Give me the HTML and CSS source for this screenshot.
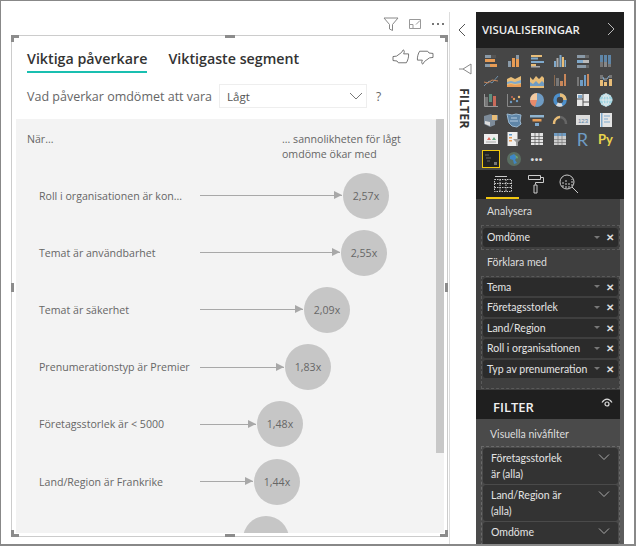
FILE: index.html
```html
<!DOCTYPE html>
<html lang="sv">
  <head>
    <meta charset="UTF-8" />
    <title>Viktiga påverkare</title>
    <link rel="stylesheet" href="styles.css">
  </head>
  <body>
    <div class="window">
      <!-- report canvas -->
      <div class="report">
        <div class="visual-tools">
          <svg width="16" height="16" viewBox="0 0 16 16"><path d="M1 2h14L9.500 8.500v6L6.500 13V8.500z" fill="none" stroke="#888"/></svg>
          <svg width="14" height="14" viewBox="0 0 14 14"><path d="M1.500 2.500h11v9h-11zM8 7.500l4-4M5 11.500V7.500h-3.500" fill="none" stroke="#999"/></svg>
          <svg width="14" height="4" viewBox="0 0 14 4"><path d="M1 1h2v2H1zM6 1h2v2H6zM11 1h2v2h-2z" fill="#777"/></svg>
        </div>
        <div class="visual">
          <i class="handle corner tl"></i><i class="handle corner tr"></i>
          <i class="handle corner bl"></i><i class="handle corner br"></i>
          <i class="handle mid-top"></i><i class="handle mid-bottom"></i>
          <i class="handle mid-left"></i><i class="handle mid-right"></i>

          <div class="tabs">
            <span class="tab active">Viktiga påverkare</span>
            <span class="tab">Viktigaste segment</span>
            <div class="thumbs">
              <svg width="18" height="16" viewBox="0 0 20 18"><path d="M1 8.500l4-.5L10.500 4l2-3c1.500.5 1.500 2 .5 4.500h5.500c.5 3-1 8-2.500 10H7L5.500 13.500 1 13z" fill="none" stroke="#666"/></svg>
              <svg width="18" height="16" viewBox="0 0 20 18"><path d="M19 9.500l-4 .5-5.500 4-2 3c-1.500-.5-1.500-2-.5-4.500H1.500c-.5-3 1-8 2.500-10h9l1.500 2 4.500.5z" fill="none" stroke="#666"/></svg>
            </div>
          </div>

          <div class="question">
            <span>Vad påverkar omdömet att vara</span>
            <div class="select">
              <span>Lågt</span>
              <svg width="14" height="8" viewBox="0 0 14 8"><path d="M1 1l6 6 6-6" fill="none" stroke="#777"/></svg>
            </div>
            <span class="help">?</span>
          </div>

          <div class="chart">
            <div class="scrollbar"></div>
            <div class="chart-head">
              <span>När...</span>
              <span class="chart-head-right">... sannolikheten för lågt<br>omdöme ökar med</span>
            </div>
            <div class="row">
              <span class="row-label">Roll i organisationen är kon...</span>
              <span class="arrow" style="width:142px"></span>
              <span class="bubble">2,57x</span>
            </div>
            <div class="row">
              <span class="row-label">Temat är användbarhet</span>
              <span class="arrow" style="width:140px"></span>
              <span class="bubble">2,55x</span>
            </div>
            <div class="row">
              <span class="row-label">Temat är säkerhet</span>
              <span class="arrow" style="width:103px"></span>
              <span class="bubble">2,09x</span>
            </div>
            <div class="row">
              <span class="row-label">Prenumerationstyp är Premier</span>
              <span class="arrow" style="width:84px"></span>
              <span class="bubble">1,83x</span>
            </div>
            <div class="row">
              <span class="row-label">Företagsstorlek är &lt; 5000</span>
              <span class="arrow" style="width:56px"></span>
              <span class="bubble">1,48x</span>
            </div>
            <div class="row">
              <span class="row-label">Land/Region är Frankrike</span>
              <span class="arrow" style="width:53px"></span>
              <span class="bubble">1,44x</span>
            </div>
            <div class="row">
              <span class="row-label"></span>
              <span class="arrow" style="width:42px"></span>
              <span class="bubble"></span>
            </div>
          </div>
        </div>
      </div>

      <!-- collapsed filter rail -->
      <div class="rail">
        <svg class="rail-back" width="10" height="14" viewBox="0 0 10 14"><path d="M8 1L2 7l6 6" fill="none" stroke="#555"/></svg>
        <svg class="rail-pin" width="14" height="12" viewBox="0 0 14 12"><path d="M5 6l8-5v10zM1 6h4" fill="none" stroke="#888"/></svg>
        <span class="rail-title">FILTER</span>
      </div>

      <!-- visualizations pane -->
      <div class="pane">
        <div class="pane-scroll"></div>
        <div class="pane-head">
          <span>VISUALISERINGAR</span>
          <svg width="8" height="14" viewBox="0 0 8 14"><path d="M1 1l6 6-6 6" fill="none" stroke="#bbb"/></svg>
        </div>

        <div class="palette">
          <svg viewBox="0 0 16 16"><rect x="2" y="2" width="6" height="3" fill="#8a9aa8"/><rect x="8" y="2" width="5" height="3" fill="#555"/><rect x="2" y="6" width="10" height="3" fill="#e89c55"/><rect x="2" y="11" width="5" height="3" fill="#8a9aa8"/><rect x="7" y="11" width="7" height="3" fill="#e89c55"/></svg>
          <svg viewBox="0 0 16 16"><rect x="2" y="8" width="3" height="6" fill="#8a9aa8"/><rect x="6" y="5" width="3" height="9" fill="#e89c55"/><rect x="10" y="2" width="3" height="12" fill="#e89c55"/><rect x="10" y="2" width="3" height="4" fill="#8a9aa8"/></svg>
          <svg viewBox="0 0 16 16"><rect x="2" y="2" width="11" height="2" fill="#e8bd78"/><rect x="2" y="4.500" width="7" height="2" fill="#7fa9cc"/><rect x="2" y="8" width="13" height="2" fill="#7fa9cc"/><rect x="2" y="11" width="5" height="2" fill="#e8bd78"/><rect x="2" y="13" width="9" height="1.500" fill="#aaa"/></svg>
          <svg viewBox="0 0 16 16"><rect x="2" y="8" width="2" height="6" fill="#7fa9cc"/><rect x="4.500" y="5" width="2" height="9" fill="#aaa"/><rect x="7.500" y="2" width="2" height="12" fill="#7fa9cc"/><rect x="10" y="4" width="2" height="10" fill="#e8bd78"/><rect x="12.500" y="7" width="1.500" height="7" fill="#7fa9cc"/></svg>
          <svg viewBox="0 0 16 16"><rect x="2" y="2" width="8" height="3" fill="#8a9aa8"/><rect x="10" y="2" width="4" height="3" fill="#666"/><rect x="2" y="7" width="6" height="3" fill="#7fa9cc"/><rect x="8" y="7" width="6" height="3" fill="#bbb"/><rect x="2" y="12" width="9" height="3" fill="#8a9aa8"/><rect x="11" y="12" width="3" height="3" fill="#666"/></svg>
          <svg viewBox="0 0 16 16"><rect x="2" y="2" width="3" height="12" fill="#777"/><rect x="2" y="2" width="3" height="7" fill="#5f86a8"/><rect x="6" y="2" width="3" height="12" fill="#5f86a8"/><rect x="6" y="9" width="3" height="5" fill="#888"/><rect x="10" y="2" width="3" height="12" fill="#777"/><rect x="10" y="2" width="3" height="9" fill="#5f86a8"/></svg>

          <svg viewBox="0 0 16 16"><path d="M1 14l5-5 3 2 6-7" fill="none" stroke="#6f8fa8"/><path d="M1 10l4 1 4-3 6 1" fill="none" stroke="#c9875a"/></svg>
          <svg viewBox="0 0 16 16"><path d="M1 7l4-2 4 2 6-3v11H1z" fill="#e8bd78"/><path d="M1 10l4-1 4 1 6-2v3l-6 1-4-1-4 1z" fill="#7fa9cc"/><path d="M1 13l4-1 4 1 6-1v3H1z" fill="#e89c55"/></svg>
          <svg viewBox="0 0 16 16"><path d="M1 5l3 3 3-4 3 3 3-3 2 2v10H1z" fill="#e8bd78"/><path d="M1 10l3 2 3-3 3 3 3-3 2 2v3l-14 0z" fill="#6f9cc4"/></svg>
          <svg viewBox="0 0 16 16"><rect x="2" y="3" width="1" height="11" fill="#8a6a50"/><rect x="4" y="6" width="3" height="8" fill="#777"/><rect x="8" y="9" width="3" height="5" fill="#c9875a"/><rect x="12" y="2" width="2" height="12" fill="#c9875a"/></svg>
          <svg viewBox="0 0 16 16"><rect x="2" y="5" width="2" height="9" fill="#777"/><rect x="5" y="8" width="3" height="6" fill="#6f9cc4"/><rect x="9" y="3" width="2" height="11" fill="#6f9cc4"/><rect x="12" y="2" width="2" height="12" fill="#c9875a"/></svg>
          <svg viewBox="0 0 16 16"><path d="M2 3h3v4H2zM6 6h3v3H6zM11 3h3v3h-3z" fill="#777"/><path d="M2 8h3v6H2zM6 10h3v4H6zM11 7h3v7h-3z" fill="#e8bd78"/><path d="M5 5l1 3M9 7l2-3" stroke="#7fa9cc"/></svg>

          <svg viewBox="0 0 16 16"><rect x="2" y="5" width="3" height="9" fill="#777"/><rect x="6" y="2" width="3" height="8" fill="#5f8f7f"/><rect x="10" y="4" width="3" height="10" fill="#c96a5a"/><path d="M1.500 2v12.500H15" fill="none" stroke="#999"/></svg>
          <svg viewBox="0 0 16 16"><path d="M1.500 2v12.500H15" fill="none" stroke="#888"/><circle cx="5" cy="10" r="1.200" fill="#6f9cc4"/><circle cx="8" cy="7" r="1.200" fill="#e89c55"/><circle cx="11" cy="9" r="1.200" fill="#6f9cc4"/><circle cx="13" cy="5" r="1.200" fill="#e8bd78"/><circle cx="6" cy="5" r="1" fill="#c96a5a"/></svg>
          <svg viewBox="0 0 16 16"><circle cx="8" cy="8" r="7" fill="#6f9cc4"/><path d="M8 8V1a7 7 0 0 0-7 7z" fill="#f2c9a0"/><path d="M8 8H1a7 7 0 0 0 5 6.700z" fill="#e88a6a"/></svg>
          <svg viewBox="0 0 16 16"><circle cx="8" cy="8" r="5" fill="none" stroke="#4d90cc" stroke-width="3.500"/><path d="M8 3a5 5 0 0 1 5 5" fill="none" stroke="#e8bd78" stroke-width="3.500"/><path d="M10 12.500a5 5 0 0 1-5-.5" fill="none" stroke="#ddd" stroke-width="3.500"/></svg>
          <svg viewBox="0 0 16 16"><rect x="2" y="2" width="12" height="12" fill="#e8e8e8"/><path d="M8 2v12M2 7h6M8 10h6" stroke="#555"/><rect x="3" y="3" width="4" height="3" fill="#7fa9cc"/></svg>
          <svg viewBox="0 0 16 16"><circle cx="8" cy="8" r="6.500" fill="#9fd3e0"/><path d="M1.500 8h13M8 1.500v13M3 4h10M3 12h10M8 1.500c-4 4-4 9 0 13M8 1.500c4 4 4 9 0 13" fill="none" stroke="#eee" stroke-width=".8"/></svg>

          <svg viewBox="0 0 16 16"><path d="M1 4l7-2 2 2 5-1v5l-3 1v4l-5 2-6-3z" fill="#7d8b99"/><path d="M9 3h5v5H9z" fill="#e8bd78"/><path d="M2 9l5 1v4l-5-2z" fill="#ddd"/></svg>
          <svg viewBox="0 0 16 16"><path d="M1 2l5 1 4-1 5 1-1 6 1 3-4 3-5-1-3-3-1-4z" fill="#5f86a8" stroke="#9ab8d0"/><path d="M5 6h6M4 9h8" stroke="#cde" stroke-width=".8"/></svg>
          <svg viewBox="0 0 16 16"><rect x="1" y="3" width="14" height="2.500" fill="#8fb4d0"/><rect x="3.500" y="7" width="9" height="2.500" fill="#e89c55"/><rect x="6" y="11" width="4" height="3" fill="#7fa9cc"/></svg>
          <svg viewBox="0 0 16 16"><path d="M2 12a6.500 6.500 0 0 1 6-7" fill="none" stroke="#e8bd78" stroke-width="2.500"/><path d="M8 5a6.500 6.500 0 0 1 6 7" fill="none" stroke="#666" stroke-width="2.500"/></svg>
          <svg viewBox="0 0 16 16"><rect x="1" y="3" width="14" height="10" fill="#ddd"/><text x="8" y="10.500" font-size="6" text-anchor="middle" fill="#5f86a8" font-family="Liberation Sans">123</text></svg>
          <svg viewBox="0 0 16 16"><rect x="2" y="1" width="12" height="14" fill="#e4e4e4"/><rect x="3" y="1" width="1.500" height="14" fill="#7fa9cc"/><path d="M6 4h6M6 7h4M6 10h6" stroke="#7fa9cc"/></svg>

          <svg viewBox="0 0 16 16"><rect x="1" y="3" width="14" height="10" fill="#eee"/><path d="M4 9l2-3 2 3z" fill="#e06a5a"/><path d="M9 9l2-3 2 3z" fill="#5fa87f"/><path d="M3 11h10" stroke="#aaa"/></svg>
          <svg viewBox="0 0 16 16"><rect x="1.500" y="1" width="10" height="14" fill="#eee"/><rect x="3" y="3" width="3" height="1.500" fill="#5f9cd0"/><rect x="3" y="6" width="3" height="1.500" fill="#e89c55"/><rect x="3" y="9" width="3" height="1.500" fill="#e89c55"/><path d="M7 8h8l-3 3v3l-2 1v-4z" fill="#999"/></svg>
          <svg viewBox="0 0 16 16"><rect x="2" y="2" width="12" height="12" fill="#e4e4e4"/><path d="M2 5.500h12M2 8.500h12M2 11.500h12M6 2v12M10 2v12" stroke="#555" stroke-width=".7"/></svg>
          <svg viewBox="0 0 16 16"><rect x="2" y="2" width="12" height="12" fill="#ccc"/><rect x="2" y="2" width="12" height="3" fill="#6f9cc4"/><path d="M2 8.500h12M2 11.500h12M6 2v12M10 2v12" stroke="#777" stroke-width=".7"/></svg>
          <span class="palette-r">R</span>
          <span class="palette-py">Py</span>

          <span class="palette-selected">
            <svg viewBox="0 0 16 16"><path d="M2 4h4M3 7h5M4 10h3" stroke="#666"/><rect x="11" y="11" width="3" height="3" fill="#777"/></svg>
          </span>
          <svg viewBox="0 0 16 16"><circle cx="8" cy="8" r="7" fill="#5a6e62"/><path d="M4 5l4-2 3 3-2 3 2 3-3 1-1-4-3-1z" fill="#3f86c4"/><path d="M9 4l3 2-1 2z" fill="#6fae6f"/></svg>
          <span class="palette-more">···</span>
        </div>

        <div class="pane-tabs">
          <span class="pane-tab selected">
            <svg width="20" height="18" viewBox="0 0 20 18"><path d="M2 1.500h12" stroke="#ccc"/><path d="M1.500 4.500h17v12h-17zM1.500 8.500h17M1.500 12.500h17M7 4.500v12M13 4.500v12" fill="none" stroke="#ccc" stroke-dasharray="1.500 1"/></svg>
          </span>
          <span class="pane-tab">
            <svg width="18" height="20" viewBox="0 0 18 20"><path d="M1.500 1.500h12v4h-12zM13.500 3.500h3v5H8.500v2M7 11h3v8H7z" fill="none" stroke="#ccc"/></svg>
          </span>
          <span class="pane-tab">
            <svg width="20" height="20" viewBox="0 0 20 20"><circle cx="8" cy="8" r="7" fill="none" stroke="#ccc"/><path d="M13 13l6 6" stroke="#ccc"/><path d="M4 13V8M7 14V6M10 14V9M13 12V5" stroke="#ccc" stroke-dasharray="2 1"/></svg>
          </span>
        </div>

        <div class="fields">
          <div class="field-title">Analysera</div>
          <div class="well">
            <div class="field"><span>Omdöme</span><i class="caret"></i><b>✕</b></div>
          </div>
          <div class="field-title">Förklara med</div>
          <div class="well well-tall">
            <div class="field"><span>Tema</span><i class="caret"></i><b>✕</b></div>
            <div class="field"><span>Företagsstorlek</span><i class="caret"></i><b>✕</b></div>
            <div class="field"><span>Land/Region</span><i class="caret"></i><b>✕</b></div>
            <div class="field"><span>Roll i organisationen</span><i class="caret"></i><b>✕</b></div>
            <div class="field"><span>Typ av prenumeration</span><i class="caret"></i><b>✕</b></div>
          </div>
        </div>

        <div class="filter-head">
          <span>FILTER</span>
          <svg width="12" height="9" viewBox="0 0 12 9"><path d="M1 4.500c3-4.500 7-4.500 10 0" fill="none" stroke="#ddd" stroke-width="1.200"/><circle cx="6" cy="6" r="2" fill="none" stroke="#ddd" stroke-width="1.200"/></svg>
        </div>

        <div class="filters">
          <div class="filter-title">Visuella nivåfilter</div>
          <div class="filter-well">
            <div class="filter-card">
              <span>Företagsstorlek<br>är (alla)</span>
              <svg width="12" height="6" viewBox="0 0 12 6"><path d="M1 .5l5 5 5-5" fill="none" stroke="#aaa"/></svg>
            </div>
            <div class="filter-card">
              <span>Land/Region är<br>(alla)</span>
              <svg width="12" height="6" viewBox="0 0 12 6"><path d="M1 .5l5 5 5-5" fill="none" stroke="#aaa"/></svg>
            </div>
            <div class="filter-card">
              <span>Omdöme</span>
              <svg width="12" height="6" viewBox="0 0 12 6"><path d="M1 .5l5 5 5-5" fill="none" stroke="#aaa"/></svg>
            </div>
          </div>
        </div>
      </div>
    </div>
  </body>
</html>
```

FILE: styles.css
```css
html,
body {
  margin: 0;
  background: #fff;
}
body {
  font-family: "Open Sans", "Noto Sans", sans-serif;
  overflow: hidden;
}
.window {
  display: flex;
  box-sizing: border-box;
  width: 636px;
  height: 546px;
  padding: 11px 10px 0 0;
  border: 1px solid #888;
  border-right-width: 2px;
  border-bottom-width: 2px;
  background: #fff;
  overflow: hidden;
}

/* report side */
.report {
  width: 449px;
  flex: none;
  padding: 0 1px 0 10px;
  box-sizing: border-box;
  border-right: 1px solid #ddd;
}
.visual-tools {
  display: flex;
  justify-content: flex-end;
  align-items: center;
  gap: 9px;
  height: 23px;
  padding-right: 3px;
}
.visual {
  position: relative;
  box-sizing: border-box;
  height: 502px;
  border: 1px solid #ccc;
  padding: 0 3px 3px 4px;
  display: flex;
  flex-direction: column;
}
.handle {
  position: absolute;
  background: #8c8c8c;
}
.corner {
  width: 8px;
  height: 7px;
  background: linear-gradient(#8c8c8c, #8c8c8c) 0 0 / 100% 3px no-repeat, linear-gradient(#8c8c8c, #8c8c8c) 0 0 / 3px 100% no-repeat;
}
.tl { top: -1px; left: -1px; }
.tr { top: -1px; right: -1px; transform: scaleX(-1); }
.bl { bottom: -1px; left: -1px; transform: scaleY(-1); }
.br { bottom: -1px; right: -1px; transform: scale(-1); }
.mid-top { top: -1px; left: 213px; width: 10px; height: 3px; }
.mid-bottom { bottom: -1px; left: 213px; width: 10px; height: 3px; }
.mid-left { left: -1px; top: 247px; width: 3px; height: 9px; }
.mid-right { right: -1px; top: 247px; width: 3px; height: 9px; }

.tabs {
  display: flex;
  align-items: flex-start;
  gap: 21px;
  padding: 12px 0 0 11px;
  height: 36px;
  box-sizing: border-box;
  font-size: 14.250px;
  font-weight: 600;
  color: #333;
}
.tab {
  line-height: 22px;
  padding-bottom: 1px;
  border-bottom: 2px solid transparent;
}
.tab.active {
  border-bottom-color: #19bfb0;
}
.thumbs {
  display: flex;
  gap: 6px;
  margin: 1px 0 0 auto;
  padding-right: 10px;
}
.question {
  display: flex;
  align-items: center;
  gap: 7px;
  height: 24px;
  margin-top: 12px;
  padding-left: 11px;
  font-size: 12.500px;
  color: #666;
}
.select {
  display: flex;
  align-items: center;
  justify-content: space-between;
  box-sizing: border-box;
  width: 148px;
  height: 24px;
  padding: 0 3px 0 7px;
  border: 1px solid #eee;
  font-size: 11.500px;
  color: #555;
}
.help {
  margin-left: 2px;
  font-size: 12px;
}
.chart {
  position: relative;
  flex: 1;
  margin-top: 11px;
  background: #f3f3f3;
  overflow: hidden;
  font-size: 10.600px;
  color: #666;
}
.scrollbar {
  position: absolute;
  top: 0;
  right: 0;
  width: 8px;
  height: 334px;
  background: #c8c8c8;
}
.chart-head {
  display: flex;
  justify-content: space-between;
  height: 48px;
  padding: 13px 0 0 11px;
  box-sizing: border-box;
  line-height: 15px;
}
.chart-head-right {
  width: 162px;
}
.row {
  display: flex;
  align-items: center;
  height: 57.200px;
}
.row-label {
  width: 184px;
  flex: none;
  padding-left: 23px;
  box-sizing: border-box;
  white-space: nowrap;
}
.arrow {
  position: relative;
  height: 1px;
  background: #a8a8a8;
  margin-right: 1px;
}
.arrow::after {
  content: "";
  position: absolute;
  right: 0;
  top: -4px;
  border-left: 8px solid #a8a8a8;
  border-top: 4.500px solid transparent;
  border-bottom: 4.500px solid transparent;
}
.bubble {
  display: flex;
  align-items: center;
  justify-content: center;
  flex: none;
  width: 46px;
  height: 46px;
  border-radius: 50%;
  background: #c6c6c6;
}

/* collapsed filter rail */
.rail {
  width: 26px;
  flex: none;
  display: flex;
  flex-direction: column;
  align-items: center;
}
.rail-back {
  margin: 11px 3px 0 0;
}
.rail-pin {
  margin: 26px 0 0 3px;
}
.rail-title {
  margin: 13px 0 0 2px;
  writing-mode: vertical-rl;
  font-size: 12.500px;
  font-weight: 700;
  color: #333;
}

/* dark pane */
.pane {
  position: relative;
  width: 148px;
  flex: none;
  background: #3f3f3f;
  color: #ddd;
  font-family: Lato, "Open Sans", sans-serif;
  font-size: 10.500px;
  display: flex;
  flex-direction: column;
}
.pane-scroll {
  position: absolute;
  top: 187px;
  right: 0;
  bottom: 0;
  width: 4px;
  background: #5c5c5c;
}
.pane-head {
  display: flex;
  align-items: center;
  justify-content: space-between;
  height: 36px;
  padding: 0 9px 2px 6px;
  box-sizing: border-box;
  background: #1f1f1f;
  font-family: "Open Sans", sans-serif;
  font-size: 11.400px;
  font-weight: 600;
  color: #eee;
}
.palette {
  display: grid;
  grid-template-columns: repeat(6, 23px);
  grid-auto-rows: 19.600px;
  justify-items: center;
  align-items: center;
  height: 122px;
  box-sizing: border-box;
  padding: 3px 0 0 3px;
  background: #464646;
}
.palette svg {
  width: 16px;
  height: 16px;
}
.palette-r {
  font-size: 18px;
  line-height: 18px;
  color: #6f9cc4;
}
.palette-py {
  font-size: 13px;
  line-height: 16px;
  font-weight: 700;
  color: #e8d44d;
}
.palette-selected {
  display: flex;
  align-items: center;
  justify-content: center;
  box-sizing: border-box;
  width: 18px;
  height: 18px;
  border: 1px solid #f2c811;
  background: #222;
}
.palette-more {
  font-size: 15px;
  line-height: 15px;
  font-weight: 700;
  color: #ddd;
}
.pane-tabs {
  display: flex;
  align-items: center;
  height: 29px;
  padding-left: 10px;
  background: #1f1f1f;
  box-sizing: border-box;
}
.pane-tab {
  display: flex;
  justify-content: center;
  align-items: center;
  width: 33px;
  height: 29px;
  box-sizing: border-box;
  border-bottom: 2px solid transparent;
}
.pane-tab.selected {
  border-bottom-color: #f2c811;
}
.fields {
  height: 191px;
  padding: 4px 0 0 5px;
  box-sizing: border-box;
  flex: none;
}
.field-title {
  height: 22px;
  line-height: 16px;
  padding-left: 6px;
}
.well {
  width: 139px;
  box-sizing: border-box;
  border: 1px dashed #5a5a5a;
  padding: 2px 1px;
  display: flex;
  flex-direction: column;
  gap: 2px;
  margin-bottom: 4px;
}
.well-tall {
  height: 113px;
  margin-bottom: 0;
  padding-top: 1px;
}
.field {
  display: flex;
  align-items: center;
  height: 18.500px;
  padding: 0 4px;
  background: #2b2b2b;
  border-radius: 3px;
  color: #e4e4e4;
}
.field span {
  flex: 1;
  white-space: nowrap;
}
.caret {
  width: 0;
  height: 0;
  margin-right: 6px;
  border-top: 3px solid #777;
  border-left: 3px solid transparent;
  border-right: 3px solid transparent;
}
.field b {
  font-size: 10px;
  line-height: 10px;
  color: #ddd;
}
.filter-head {
  display: flex;
  justify-content: space-between;
  flex: none;
  height: 29px;
  padding: 8px 11px 0 17px;
  box-sizing: border-box;
  background: #1f1f1f;
  font-family: "Open Sans", sans-serif;
  font-size: 13px;
  line-height: 18px;
  font-weight: 600;
  color: #f0f0f0;
}
.filters {
  flex: 1;
  background: #4a4a4a;
  padding: 7px 0 0 5px;
  overflow: hidden;
}
.filter-title {
  height: 20px;
  line-height: 16px;
  padding-left: 9px;
}
.filter-well {
  width: 139px;
  box-sizing: border-box;
  border: 1px dashed #6a6a6a;
  border-bottom: 0;
  padding: 1px 1px 0;
  display: flex;
  flex-direction: column;
  gap: 1px;
}
.filter-card {
  display: flex;
  justify-content: space-between;
  box-sizing: border-box;
  min-height: 34px;
  padding: 2px 8px;
  background: #333;
  border-radius: 3px;
  line-height: 16px;
  color: #e4e4e4;
}
.filter-card svg {
  margin-top: 4px;
}
```
